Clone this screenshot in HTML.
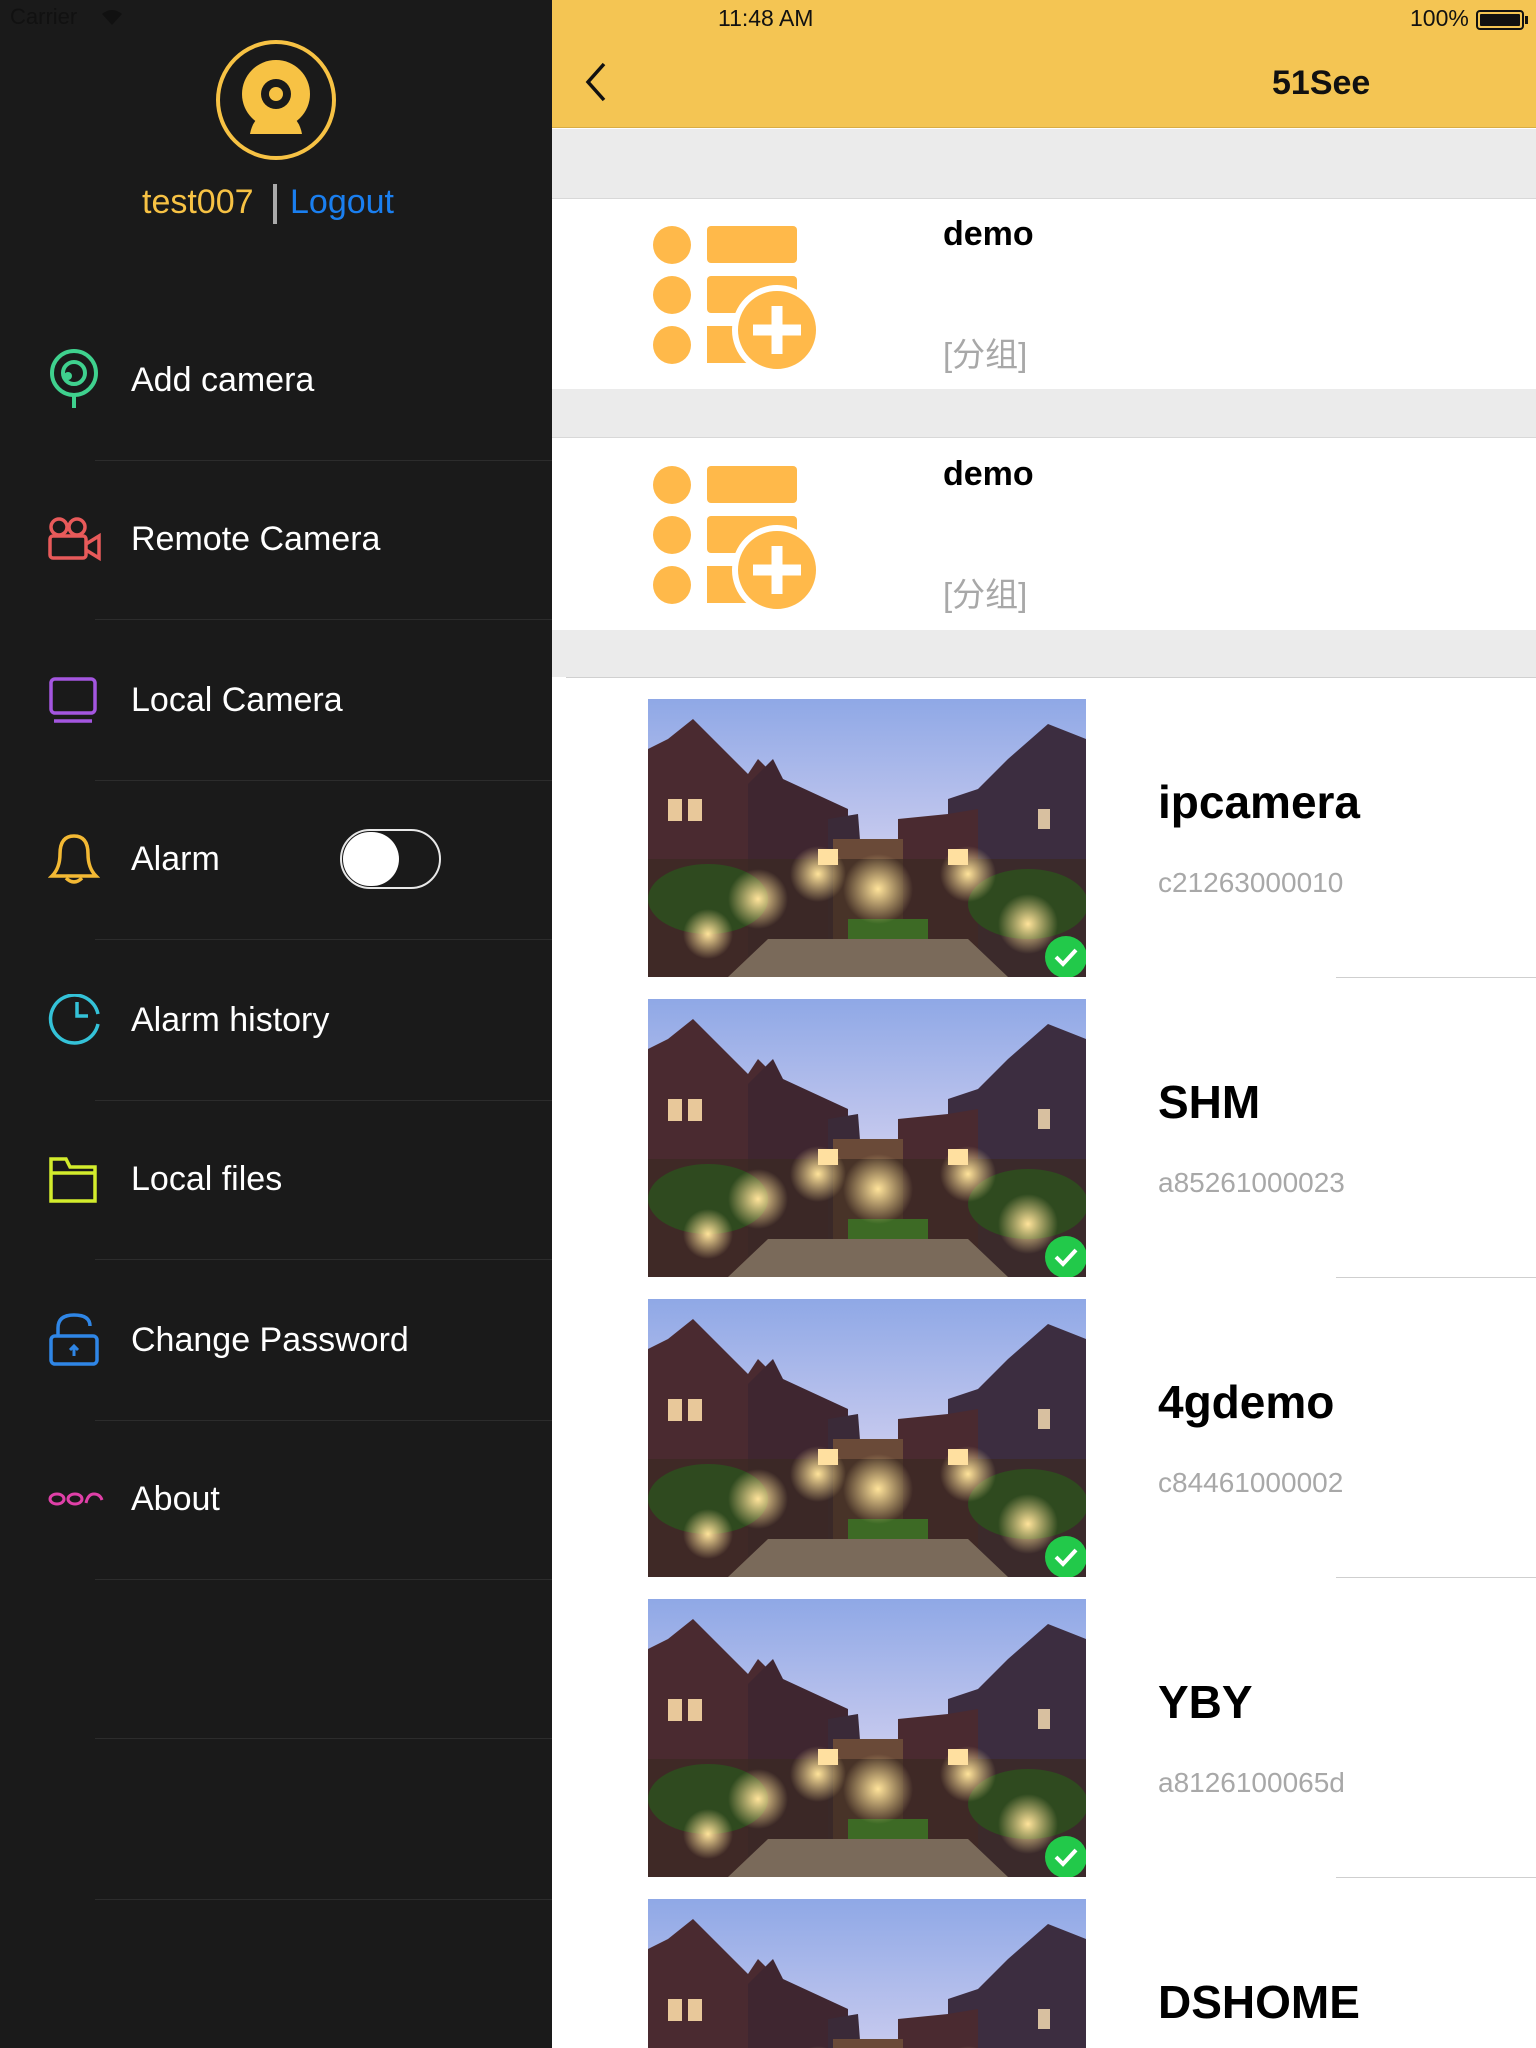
<!DOCTYPE html>
<html><head><meta charset="utf-8">
<style>
*{margin:0;padding:0;box-sizing:border-box}
html,body{width:1536px;height:2048px;overflow:hidden;background:#fff;font-family:"Liberation Sans","Noto Sans CJK SC",sans-serif}
#root{position:relative;width:1536px;height:2048px;overflow:hidden}
.side{position:absolute;left:0;top:0;width:552px;height:2048px;background:#1a1a1a}
.abs{position:absolute}
.item{position:absolute;left:131px;color:#fff;font-size:34px;line-height:40px}
.sep{position:absolute;left:95px;width:457px;height:1px;background:#2c2c2c}
.main{position:absolute;left:552px;top:0;width:984px;height:2048px;background:#fff;overflow:hidden}
.name{position:absolute;left:606px;font-size:46px;font-weight:bold;color:#000}
.ser{position:absolute;left:606px;font-size:28px;color:#a8a8a8}
.rsep{position:absolute;left:784px;width:200px;height:1px;background:#cfcfcf}
.img{position:absolute;left:96px;width:438px;height:278px;overflow:hidden}
</style></head><body><div id="root">
<svg width="0" height="0" style="position:absolute">
<defs>
<linearGradient id="sky" x1="0" y1="0" x2="0" y2="1"><stop offset="0" stop-color="#8fa8e6"/><stop offset="0.5" stop-color="#c4c8ee"/><stop offset="1" stop-color="#a8a0d0"/></linearGradient>
<radialGradient id="glow" cx="0.5" cy="0.5" r="0.5"><stop offset="0" stop-color="#ffe39a"/><stop offset="1" stop-color="#ffe39a" stop-opacity="0"/></radialGradient>
<symbol id="pic" viewBox="0 0 438 278">
<rect width="438" height="278" fill="url(#sky)"/>
<path d="M0 50 L20 40 L45 20 L70 45 L100 75 L110 60 L130 80 L130 278 L0 278Z" fill="#4a2a30"/>
<path d="M100 85 L125 60 L135 80 L200 110 L200 278 L100 278Z" fill="#3f2630"/>
<path d="M180 120 L210 115 L215 180 L180 278Z" fill="#3a2a38"/>
<path d="M438 40 L400 25 L360 60 L330 90 L300 100 L300 278 L438 278Z" fill="#3c2d40"/>
<path d="M330 110 L300 115 L250 120 L250 278 L330 278Z" fill="#4a2a30"/>
<path d="M185 140 L255 140 L255 278 L185 278Z" fill="#6a4a38"/>
<rect x="0" y="160" width="438" height="118" fill="#3a2a22" opacity="0.7"/>
<ellipse cx="60" cy="200" rx="60" ry="35" fill="#2f4a1f"/>
<ellipse cx="380" cy="205" rx="60" ry="35" fill="#2f4a1f"/>
<rect x="200" y="220" width="80" height="58" fill="#3d6a25"/>
<path d="M120 240 L320 240 L360 278 L80 278Z" fill="#7a6a5a"/>
<circle cx="110" cy="200" r="30" fill="url(#glow)"/>
<circle cx="170" cy="175" r="28" fill="url(#glow)"/>
<circle cx="230" cy="190" r="35" fill="url(#glow)"/>
<circle cx="320" cy="175" r="28" fill="url(#glow)"/>
<circle cx="380" cy="225" r="30" fill="url(#glow)"/>
<circle cx="60" cy="235" r="25" fill="url(#glow)"/>
<rect x="20" y="100" width="14" height="22" fill="#e8c89a"/><rect x="40" y="100" width="14" height="22" fill="#e8c89a"/>
<rect x="170" y="150" width="20" height="16" fill="#ffe0a0"/><rect x="300" y="150" width="20" height="16" fill="#ffe0a0"/>
<rect x="390" y="110" width="12" height="20" fill="#d8c0a0"/>
</symbol>
<symbol id="grp" viewBox="0 0 166 146">
<g fill="#ffb94a">
<ellipse cx="19" cy="21" rx="19" ry="19"/><ellipse cx="19" cy="71" rx="19" ry="19"/><ellipse cx="19" cy="121" rx="19" ry="19"/>
<rect x="54" y="2" width="90" height="37" rx="4"/><rect x="54" y="52" width="90" height="37" rx="4"/><rect x="54" y="102" width="60" height="37"/>
<circle cx="124" cy="106" r="42" stroke="#fff" stroke-width="6"/>
</g>
<path d="M124 82 V130 M100 106 H148" stroke="#fff" stroke-width="11"/>
</symbol>
</defs></svg>

<div class="side">
<div class="abs" style="left:10px;top:4px;font-size:22px;color:#111">Carrier</div>
<svg class="abs" style="left:100px;top:8px" width="24" height="18" viewBox="0 0 24 18"><path d="M2 6 Q12 -2 22 6 L12 17Z" fill="#111"/></svg>
<svg class="abs" style="left:214px;top:38px" width="124" height="124" viewBox="0 0 124 124">
<circle cx="62" cy="62" r="58" fill="none" stroke="#f7c244" stroke-width="4"/>
<circle cx="62" cy="56" r="34" fill="#f7c244"/>
<path d="M36 96 Q40 74 62 74 Q84 74 88 96Z" fill="#f7c244"/>
<circle cx="62" cy="56" r="15" fill="#1a1a1a"/><circle cx="62" cy="56" r="7" fill="#f7c244"/>
</svg>
<div class="abs" style="left:142px;top:183px;font-size:34px;color:#f7c244">test007</div>
<div class="abs" style="left:273px;top:184px;width:4px;height:40px;background:#aaa"></div>
<div class="abs" style="left:290px;top:183px;font-size:34px;color:#1a7ff0">Logout</div>

<svg class="abs" style="left:48px;top:348px" width="52" height="64" viewBox="0 0 52 64"><circle cx="26" cy="25" r="22" fill="none" stroke="#3fd18e" stroke-width="4"/><circle cx="26" cy="25" r="11" fill="none" stroke="#3fd18e" stroke-width="4"/><circle cx="20" cy="28" r="4" fill="#3fd18e"/><path d="M26 47V60" stroke="#3fd18e" stroke-width="4"/></svg>
<div class="item" style="top:360px">Add camera</div>
<div class="sep" style="top:460px"></div>

<svg class="abs" style="left:48px;top:516px" width="54" height="46" viewBox="0 0 54 46"><g fill="none" stroke="#e85a5a" stroke-width="3.5"><circle cx="11" cy="11" r="8"/><circle cx="29" cy="11" r="8"/><rect x="2" y="20" width="36" height="22" rx="3"/><path d="M38 28 L51 20 V42 L38 34"/></g></svg>
<div class="item" style="top:519px">Remote Camera</div>
<div class="sep" style="top:619px"></div>

<svg class="abs" style="left:48px;top:676px" width="52" height="48" viewBox="0 0 52 48"><g fill="none" stroke="#a456e0" stroke-width="3.5"><rect x="3" y="3" width="44" height="34" rx="4"/><path d="M6 45H44"/></g></svg>
<div class="item" style="top:680px">Local Camera</div>
<div class="sep" style="top:780px"></div>

<svg class="abs" style="left:48px;top:832px" width="52" height="54" viewBox="0 0 52 54"><g fill="none" stroke="#f3b934" stroke-width="3.5"><path d="M4 44 Q12 36 12 22 Q12 4 26 4 Q40 4 40 22 Q40 36 48 44Z"/><path d="M18 46 Q26 54 34 46"/></g></svg>
<div class="item" style="top:839px">Alarm</div>
<div class="abs" style="left:340px;top:829px;width:101px;height:60px;border:2px solid #e8e8e8;border-radius:30px"></div>
<div class="abs" style="left:343px;top:832px;width:56px;height:54px;background:#fff;border-radius:28px"></div>
<div class="sep" style="top:939px"></div>

<svg class="abs" style="left:48px;top:994px" width="56" height="52" viewBox="0 0 56 52"><g fill="none" stroke="#34c2d8" stroke-width="3.5"><path d="M50 30 A24 24 0 1 1 50 20"/><path d="M29 8V22H40"/></g></svg>
<div class="item" style="top:1000px">Alarm history</div>
<div class="sep" style="top:1100px"></div>

<svg class="abs" style="left:48px;top:1155px" width="52" height="50" viewBox="0 0 52 50"><g fill="none" stroke="#d3ec2c" stroke-width="3.5"><path d="M3 8V46H47V12H22L18 4H3Z"/><path d="M3 18H47"/></g></svg>
<div class="item" style="top:1159px">Local files</div>
<div class="sep" style="top:1259px"></div>

<svg class="abs" style="left:48px;top:1312px" width="54" height="56" viewBox="0 0 54 56"><g fill="none" stroke="#2f86e6" stroke-width="3.5"><rect x="3" y="24" width="46" height="28" rx="4"/><path d="M10 24V16 Q10 3 26 3 Q42 3 42 14"/></g><path d="M26 34V44M22 38L26 34L30 38" stroke="#2f86e6" stroke-width="3" fill="none"/></svg>
<div class="item" style="top:1320px">Change Password</div>
<div class="sep" style="top:1420px"></div>

<svg class="abs" style="left:48px;top:1488px" width="56" height="22" viewBox="0 0 56 22"><g fill="none" stroke="#e040a8" stroke-width="3"><ellipse cx="9" cy="11" rx="7" ry="5"/><ellipse cx="27" cy="11" rx="7" ry="5"/><path d="M38 15 Q40 6 46 6 Q52 6 54 12"/></g></svg>
<div class="item" style="top:1479px">About</div>
<div class="sep" style="top:1579px"></div>
<div class="sep" style="top:1738px"></div>
<div class="sep" style="top:1899px"></div>
</div>

<div class="main">
<div class="abs" style="left:0;top:0;width:984px;height:128px;background:#f4c553;border-bottom:1px solid #d8ad45"></div>
<div class="abs" style="left:166px;top:5px;font-size:23px;color:#111">11:48 AM</div>
<div class="abs" style="left:858px;top:5px;font-size:23px;color:#111">100%</div>
<div class="abs" style="left:924px;top:10px;width:48px;height:20px;border:2px solid #111;border-radius:4px;padding:2px"><div style="width:100%;height:100%;background:#111;border-radius:1px"></div></div>
<div class="abs" style="left:973px;top:16px;width:3px;height:8px;background:#111"></div>
<svg class="abs" style="left:33px;top:62px" width="22" height="40" viewBox="0 0 22 40"><path d="M19 2 L3 20 L19 38" fill="none" stroke="#111" stroke-width="3.5"/></svg>
<div class="abs" style="left:720px;top:64px;font-size:34px;font-weight:bold;color:#111">51See</div>

<div class="abs" style="left:0;top:129px;width:984px;height:548px;background:#ebebeb"></div>
<div class="abs" style="left:0;top:198px;width:984px;height:191px;background:#fff;border-top:1px solid #d8d8d8"></div>
<svg class="abs" style="left:101px;top:224px" width="166" height="146"><use href="#grp"/></svg>
<div class="abs" style="left:391px;top:215px;font-size:34px;font-weight:bold;color:#000">demo</div>
<div class="abs" style="left:391px;top:328px;font-size:33px;color:#a8a8a8">[分组]</div>
<div class="abs" style="left:0;top:437px;width:984px;height:193px;background:#fff;border-top:1px solid #d8d8d8"></div>
<svg class="abs" style="left:101px;top:464px" width="166" height="146"><use href="#grp"/></svg>
<div class="abs" style="left:391px;top:455px;font-size:34px;font-weight:bold;color:#000">demo</div>
<div class="abs" style="left:391px;top:568px;font-size:33px;color:#a8a8a8">[分组]</div>
<div class="abs" style="left:14px;top:677px;width:970px;height:1px;background:#d0d0d0"></div>

<svg class="img" style="top:699px"><use href="#pic"/><circle cx="418" cy="258" r="21" fill="#22c94a"/><path d="M408 258 L415 265 L428 251" stroke="#fff" stroke-width="4" fill="none"/></svg>
<div class="name" style="top:775px">ipcamera</div><div class="ser" style="top:867px">c21263000010</div><div class="rsep" style="top:977px"></div>
<svg class="img" style="top:999px"><use href="#pic"/><circle cx="418" cy="258" r="21" fill="#22c94a"/><path d="M408 258 L415 265 L428 251" stroke="#fff" stroke-width="4" fill="none"/></svg>
<div class="name" style="top:1075px">SHM</div><div class="ser" style="top:1167px">a85261000023</div><div class="rsep" style="top:1277px"></div>
<svg class="img" style="top:1299px"><use href="#pic"/><circle cx="418" cy="258" r="21" fill="#22c94a"/><path d="M408 258 L415 265 L428 251" stroke="#fff" stroke-width="4" fill="none"/></svg>
<div class="name" style="top:1375px">4gdemo</div><div class="ser" style="top:1467px">c84461000002</div><div class="rsep" style="top:1577px"></div>
<svg class="img" style="top:1599px"><use href="#pic"/><circle cx="418" cy="258" r="21" fill="#22c94a"/><path d="M408 258 L415 265 L428 251" stroke="#fff" stroke-width="4" fill="none"/></svg>
<div class="name" style="top:1675px">YBY</div><div class="ser" style="top:1767px">a8126100065d</div><div class="rsep" style="top:1877px"></div>
<svg class="img" style="top:1899px;height:149px"><use href="#pic" width="438" height="278"/></svg>
<div class="name" style="top:1975px">DSHOME</div>
</div>
</div></body></html>
